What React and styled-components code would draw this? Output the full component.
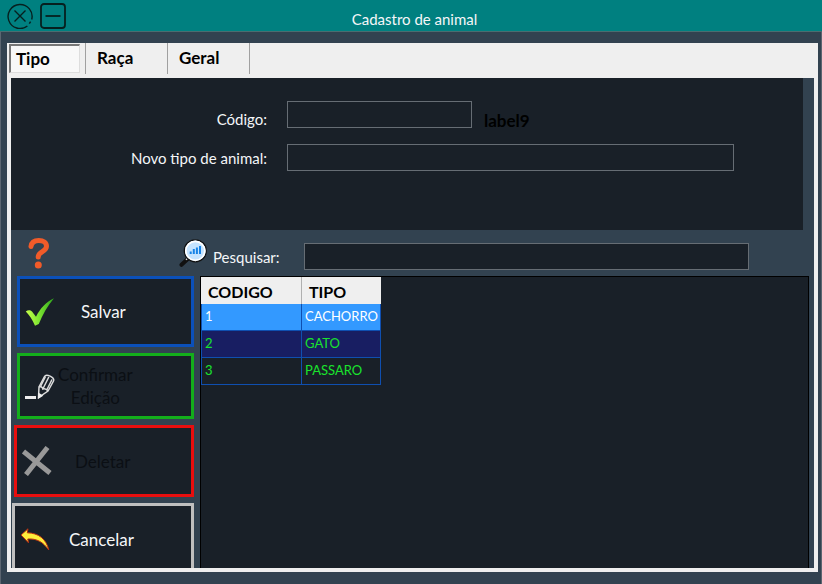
import React, { useState } from "react";
import styled, { createGlobalStyle } from "styled-components";

const GlobalStyle = createGlobalStyle`
  *, *::before, *::after { box-sizing: border-box; }
  body { margin: 0; background: #324250; }
  body, button, input { font-family: Lato, "Liberation Sans", sans-serif; font-size: 15px; }
`;

const Window = styled.div`
  display: flex;
  flex-direction: column;
  height: 100vh;
  min-height: 580px;
  color: #f4f6f8;
  background: #324250;
`;

const TitleBar = styled.header`
  display: grid;
  grid-template-columns: 1fr auto 1fr;
  align-items: center;
  flex: none;
  height: 32px;
  padding: 0 0 0 7px;
  background: #008080;
  border-bottom: 1px solid #4b6d70;
`;

const WindowButtons = styled.div`
  display: flex;
  gap: 7px;
`;

const WindowButton = styled.button`
  display: flex;
  padding: 0;
  border: 0;
  background: none;
  color: #06201f;
`;

const Title = styled.h1`
  margin: 0;
  padding-top: 6px;
  font-size: 15px;
  line-height: 18px;
  font-weight: 400;
`;

const Body = styled.main`
  display: flex;
  flex: 1;
  min-height: 0;
  padding: 11px 3px 12px 6px;
  border: solid #5b6570;
  border-width: 0 1px 0 1px;
`;

const TabFrame = styled.div`
  display: flex;
  flex: 1;
  flex-direction: column;
  min-width: 0;
  padding: 0 4px 4px;
  background: #efefef;
`;

const TabList = styled.div`
  display: flex;
  flex: none;
  height: 35px;
  margin-left: -2px;
`;

const Tab = styled.button`
  width: ${(p) => (p.$active ? 71 : 82)}px;
  height: ${(p) => (p.$active ? 29 : 31)}px;
  margin: ${(p) => (p.$active ? "1px 5px 0 0" : "0")};
  padding: ${(p) => (p.$active ? "0 0 0 5px" : "0 0 1px 11px")};
  border: 0 solid #a0a0a0;
  border-width: ${(p) => (p.$active ? "2px 1px 1px 2px" : "0 1px 0 0")};
  border-color: ${(p) => (p.$active ? "#777 #ddd #ddd #777" : "#a0a0a0")};
  background: ${(p) => (p.$active ? "#f8f8f8" : "none")};
  color: #000;
  font-size: 17px;
  line-height: 20px;
  font-weight: 700;
  text-align: left;

  &:nth-child(2) {
    width: 83px;
    border-left-width: 1px;
  }
`;

const Page = styled.section`
  display: flex;
  flex: 1;
  flex-direction: column;
  min-height: 0;
  background: #324250;
`;

const Form = styled.form`
  display: grid;
  flex: none;
  grid-template-columns: 256px 1fr;
  grid-auto-rows: 27px;
  gap: 16px 20px;
  height: 152px;
  margin-right: 11px;
  padding: 23px 69px 0 0;
  background: #192028;
`;

const Label = styled.label`
  align-self: ${(p) => (p.$low ? "end" : "center")};
  text-align: right;
  line-height: 18px;
`;

const FieldRow = styled.div`
  display: flex;
  align-items: flex-end;
  gap: 12px;
`;

const Hint = styled.span`
  color: #000;
  font-size: 17px;
  line-height: 14px;
  font-weight: 700;
`;

const TextBox = styled.input`
  width: ${(p) => (p.$short ? "185px" : "100%")};
  min-width: 0;
  height: 27px;
  padding: 2px 4px;
  border: 1px solid #666d74;
  border-radius: 0;
  background: #192028;
  color: #f4f6f8;
`;

const SearchRow = styled.div`
  display: flex;
  flex: none;
  align-items: center;
  height: 46px;
  padding: 0 65px 0 17px;
`;

const HelpButton = styled.button`
  display: flex;
  margin-right: 129px;
  padding: 0;
  border: 0;
  background: none;
`;

const SearchLabel = styled.label`
  flex: none;
  width: 97px;
  padding: 8px 0 0 6px;
  line-height: 18px;
`;

const SearchSlot = styled.div`
  flex: 1;
  padding-top: 6px;
`;

const Work = styled.div`
  display: flex;
  flex: 1;
  gap: 6px;
  min-height: 0;
  padding-right: 5px;
`;

const Actions = styled.div`
  display: flex;
  flex: none;
  flex-direction: column;
  gap: 6px;
  width: 183px;
  padding-left: 1px;
  overflow: hidden;
`;

const ActionButton = styled.button`
  display: flex;
  flex: none;
  align-items: center;
  gap: ${(p) => p.$gap}px;
  height: ${(p) => p.$height}px;
  margin-left: ${(p) => p.$indent}px;
  padding: 0 5px;
  border: 3px solid ${(p) => p.$color};
  background: #192028;
  color: #f4f6f8;
  font-size: 17px;
  line-height: 23px;
  white-space: pre-line;

  &:disabled { color: #0b0f14; }
  svg { flex: none; }
`;

const GridArea = styled.div`
  flex: 1;
  min-width: 0;
  border: solid #000;
  border-width: 1px 1px 0 1px;
  background: #192028;
`;

const Table = styled.table`
  border-collapse: separate;
  border-spacing: 0;
  table-layout: fixed;
  width: 180px;
`;

const HeadCell = styled.th`
  width: ${(p) => p.$width}px;
  height: 27px;
  padding: 3px 0 0 7px;
  border-right: ${(p) => (p.$last ? "0" : "1px solid #b0b0b0")};
  background: #efefef;
  color: #000;
  font-size: 16px;
  line-height: 20px;
  text-align: left;
`;

const Row = styled.tr`
  background: ${(p) => p.$fill};
  color: ${(p) => (p.$selected ? "#fff" : "#19e32d")};
`;

const Cell = styled.td`
  height: 27px;
  padding: 0 0 2px 3px;
  border: solid #0f4fb0;
  border-width: 0 1px 1px 0;
  font-size: 13px;
  line-height: 18px;

  &:first-child { border-left-width: 1px; }
`;

const CloseIcon = () => (
  <svg width="26" height="26" viewBox="0 0 26 26" fill="none" stroke="currentColor" strokeWidth="1.4">
    <path d="M20.4 23A12 12 0 1 1 24.7 16.5" />
    <path d="M22.3 20.6l1.3-2" />
    <path d="M7.500 7.500l11 11M18.500 7.500L7.500 18.500" />
  </svg>
);

const MinimizeIcon = () => (
  <svg width="26" height="26" viewBox="0 0 26 26" fill="none" stroke="currentColor" strokeWidth="1.8">
    <rect x="1" y="1" width="24" height="24" rx="3" />
    <path d="M5.5 13h15" />
  </svg>
);

const HelpIcon = () => (
  <svg width="22" height="32" viewBox="0 0 22 32" fill="none">
    <path d="M3 9.500C3.500 5.500 6.500 3.500 10.800 3.500c4.600 0 7.700 2.200 7.700 5.800 0 5.400-8.300 5.200-8.300 10.700" stroke="#f15b29" strokeWidth="5" strokeLinecap="round" />
    <circle cx="10.300" cy="28" r="3.500" fill="#f15b29" />
  </svg>
);

const SearchIcon = () => (
  <svg width="28" height="28" viewBox="0 0 28 28" fill="none">
    <path d="M2.500 25.800l6.500-6" stroke="#111" strokeWidth="4" strokeLinecap="round" />
    <path d="M7 20.800l2.500-2.300" stroke="#ddd" strokeWidth="1.500" />
    <circle cx="16.300" cy="11.800" r="11" fill="#c5e4ff" stroke="#111" strokeWidth="1.300" />
    <circle cx="16.300" cy="11.800" r="9.500" stroke="#fff" strokeWidth="1.700" />
    <path d="M11.700 15v-2.500M14.800 15v-5M17.900 15V8.500M21 15V7" stroke="#1683e6" strokeWidth="2" />
  </svg>
);

const CheckIcon = () => (
  <svg width="30" height="30" viewBox="0 0 30 30">
    <defs>
      <linearGradient id="leaf" x1="0" x2="1" y1="0" y2="0">
        <stop offset="0" stopColor="#c8ff4a" />
        <stop offset=".45" stopColor="#80e632" />
        <stop offset="1" stopColor="#2ca51b" />
      </linearGradient>
    </defs>
    <path d="M.8 14.500C3 12.500 5.500 13 7 14.500l4 5.200C15.500 11 21 5 29 1.200 22.500 9.200 17.500 17.500 13.800 27L10 28.800C7.500 23 4.500 18 .8 14.500z" fill="url(#leaf)" />
  </svg>
);

const PencilIcon = () => (
  <svg width="30" height="30" viewBox="0 0 30 30" fill="none" stroke="#dcdcdc" strokeWidth="1.500">
    <path d="M0 26.500h11" stroke="#eee" strokeWidth="3" />
    <path d="M13.500 26.500l.5-10.500L19.500 5.500c1.500-3 10.500.5 9 4.500L23 20z" />
    <path d="M14 16c2-.8 3.500.2 3.800 2 2-.5 4 .3 5.200 2M17.800 18L23.800 6M15.500 15.500L20.500 5.500M21.500 19.500l5.500-11" />
    <path d="M13 28l.3-6.500 5 3.200z" fill="#eee" stroke="none" />
  </svg>
);

const DeleteIcon = () => (
  <svg width="30" height="30" viewBox="0 0 30 30" fill="none" stroke="#999" strokeWidth="5">
    <path d="M1.500 5.500L28 27M25.500 1.500L4 28.500" />
  </svg>
);

const UndoIcon = () => (
  <svg width="30" height="30" viewBox="0 0 30 30">
    <path d="M1 11L8 4.800l-.7 4c11 .2 19 6 21.500 17.200C23 18 17 14.500 7.800 15l.7 3.800z" fill="#ffed3b" stroke="#b82c13" strokeWidth="1" strokeLinejoin="round" />
  </svg>
);

const actions = [
  { text: "Salvar", Icon: CheckIcon, color: "#0b50b9", height: 71, indent: 5, gap: 26 },
  { text: "Confirmar\nEdição", Icon: PencilIcon, color: "#13ae1b", height: 66, indent: 5, gap: 3, disabled: true },
  { text: "Deletar", Icon: DeleteIcon, color: "#e80e0e", height: 72, indent: 2, gap: 23, disabled: true },
  { text: "Cancelar", Icon: UndoIcon, color: "#bfbfbf", height: 72, indent: 0, gap: 19 },
];

const animals = [
  { id: 1, name: "CACHORRO", fill: "#3399ff" },
  { id: 2, name: "GATO", fill: "#181e62" },
  { id: 3, name: "PASSARO", fill: "#192028" },
];

export default function App() {
  const [tab, setTab] = useState("Tipo");

  return (
    <Window>
      <GlobalStyle />
      <TitleBar>
        <WindowButtons>
          <WindowButton aria-label="Fechar"><CloseIcon /></WindowButton>
          <WindowButton aria-label="Minimizar"><MinimizeIcon /></WindowButton>
        </WindowButtons>
        <Title>Cadastro de animal</Title>
      </TitleBar>
      <Body>
        <TabFrame>
          <TabList role="tablist">
            {["Tipo", "Raça", "Geral"].map((name) => (
              <Tab key={name} role="tab" aria-selected={tab === name} $active={tab === name} onClick={() => setTab(name)}>
                {name}
              </Tab>
            ))}
          </TabList>
          <Page>
            <Form onSubmit={(e) => e.preventDefault()}>
              <Label $low htmlFor="code">Código:</Label>
              <FieldRow>
                <TextBox $short id="code" />
                <Hint>label9</Hint>
              </FieldRow>
              <Label htmlFor="kind">Novo tipo de animal:</Label>
              <TextBox id="kind" />
            </Form>
            <SearchRow>
              <HelpButton aria-label="Ajuda"><HelpIcon /></HelpButton>
              <SearchIcon />
              <SearchLabel htmlFor="search">Pesquisar:</SearchLabel>
              <SearchSlot><TextBox id="search" /></SearchSlot>
            </SearchRow>
            <Work>
              <Actions>
                {actions.map(({ text, Icon, color, height, indent, gap, disabled }) => (
                  <ActionButton key={text} $color={color} $height={height} $indent={indent} $gap={gap} disabled={disabled}>
                    <Icon />
                    <span>{text}</span>
                  </ActionButton>
                ))}
              </Actions>
              <GridArea>
                <Table>
                  <thead>
                    <tr>
                      <HeadCell $width={101}>CODIGO</HeadCell>
                      <HeadCell $width={79} $last>TIPO</HeadCell>
                    </tr>
                  </thead>
                  <tbody>
                    {animals.map((a) => (
                      <Row key={a.id} $fill={a.fill} $selected={a.id === 1}>
                        <Cell>{a.id}</Cell>
                        <Cell>{a.name}</Cell>
                      </Row>
                    ))}
                  </tbody>
                </Table>
              </GridArea>
            </Work>
          </Page>
        </TabFrame>
      </Body>
    </Window>
  );
}
